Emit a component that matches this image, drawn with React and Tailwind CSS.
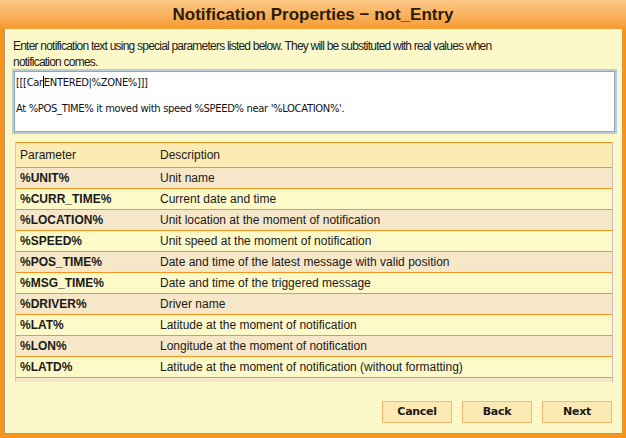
import React from 'react';

const rows = [
  ['%UNIT%', 'Unit name'],
  ['%CURR_TIME%', 'Current date and time'],
  ['%LOCATION%', 'Unit location at the moment of notification'],
  ['%SPEED%', 'Unit speed at the moment of notification'],
  ['%POS_TIME%', 'Date and time of the latest message with valid position'],
  ['%MSG_TIME%', 'Date and time of the triggered message'],
  ['%DRIVER%', 'Driver name'],
  ['%LAT%', 'Latitude at the moment of notification'],
  ['%LON%', 'Longitude at the moment of notification'],
  ['%LATD%', 'Latitude at the moment of notification (without formatting)'],
];

function DialogButton({ children }) {
  return (
    <button
      type="button"
      className="h-[22px] w-[70px] border border-[#fbb970] bg-[#fde9b3] text-[11px] font-bold tracking-[-0.3px] text-[#1a1a1a] [font-family:'DejaVu_Sans',sans-serif]"
    >
      {children}
    </button>
  );
}

export default function App() {
  return (
    <div className="flex h-[438px] w-[626px] flex-col bg-[#f7941d] [font-family:'Liberation_Sans',Arial,sans-serif]">
      <div className="flex h-[29px] shrink-0 items-center justify-center bg-gradient-to-b from-[#fbc887] to-[#f59a2b]">
        <h1 className="text-[17px] font-bold text-[#2a1c08]">Notification Properties − not_Entry</h1>
      </div>

      <div className="mx-[4px] mb-[4px] flex flex-1 flex-col border-b border-l border-[#a09a90] bg-[#fdf8ca]">
        <p className="pl-[8px] pr-[20px] pt-[9px] text-[12px] leading-[16px] tracking-[-0.78px] text-[#1a1a1a]">
          Enter notification text using special parameters listed below. They will be substituted with real values when
          <br />
          notification comes.
        </p>

        <div className="ml-[9px] mt-[1px] h-[61px] w-[601px] border border-[#8ea6bc] bg-white px-[1px] pt-[2px] text-[10px] leading-[13px] tracking-[-0.35px] text-[#111] shadow-[0_0_0_2px_#bccbd9] [font-family:'DejaVu_Sans',sans-serif]">
          <div>
            [[[Car<span className="inline-block h-[12px] w-px translate-y-[2px] bg-black" />ENTERED|%ZONE%]]]
          </div>
          <div>&nbsp;</div>
          <div>At %POS_TIME% it moved with speed %SPEED% near '%LOCATION%'.</div>
        </div>

        <div className="ml-[10px] mt-[10px] h-[240px] w-[598px] overflow-hidden border-l border-r border-l-[#c9c6d6] border-r-[#c4c0b8] text-[12px] text-[#1a1a1a]">
          <div className="flex h-[26px] items-center border-b border-t border-[#f7941d] bg-[#fdebb4]">
            <div className="w-[144px] pl-[4px]">Parameter</div>
            <div>Description</div>
          </div>
          {rows.map(([param, desc], i) => (
            <div
              key={param}
              className={`flex h-[21px] items-center border-b border-[#f7941d] ${i % 2 === 0 ? 'bg-[#f6e7c8]' : 'bg-[#fef9c9]'}`}
            >
              <div className="w-[144px] pl-[4px] font-bold">{param}</div>
              <div>{desc}</div>
            </div>
          ))}
          <div className="h-[21px] bg-[#f6e7c8]" />
        </div>

        <div className="mr-[10px] mt-[19px] flex justify-end gap-[10px]">
          <DialogButton>Cancel</DialogButton>
          <DialogButton>Back</DialogButton>
          <DialogButton>Next</DialogButton>
        </div>
      </div>
    </div>
  );
}
